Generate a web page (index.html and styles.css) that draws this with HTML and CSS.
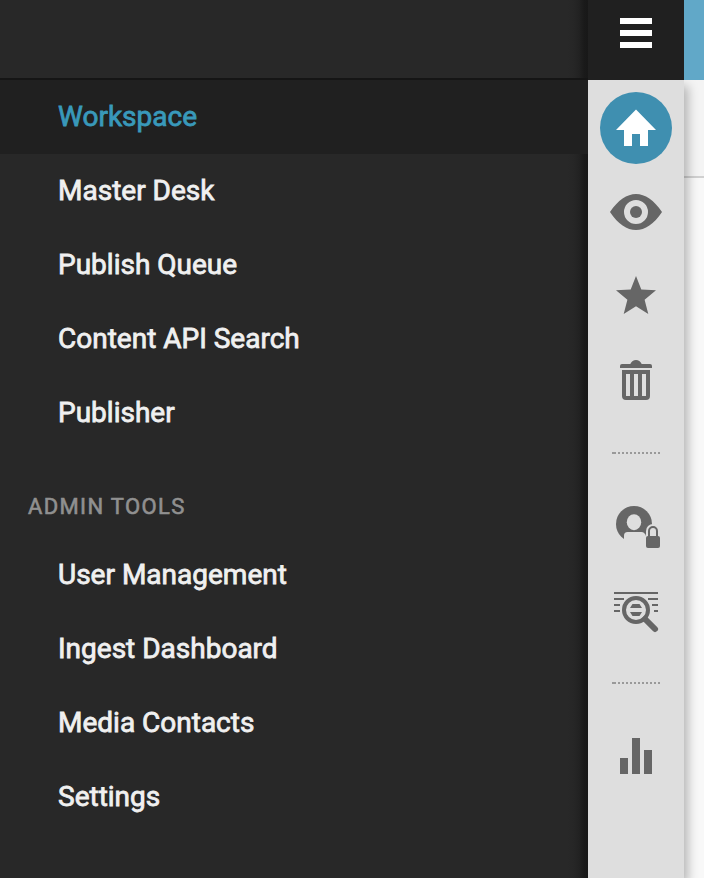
FILE: index.html
```html
<!DOCTYPE html>
<html lang="en">
<head>
<meta charset="utf-8">
<title>Workspace</title>
<link rel="stylesheet" href="styles.css">
</head>
<body>
<div class="app">
  <nav class="menu">
    <div class="menu-head"></div>
    <ul class="menu-list">
      <li class="item active">Workspace</li>
      <li class="item">Master Desk</li>
      <li class="item">Publish Queue</li>
      <li class="item">Content API Search</li>
      <li class="item">Publisher</li>
    </ul>
    <h2 class="menu-title">ADMIN TOOLS</h2>
    <ul class="menu-list">
      <li class="item">User Management</li>
      <li class="item">Ingest Dashboard</li>
      <li class="item">Media Contacts</li>
      <li class="item">Settings</li>
    </ul>
  </nav>
  <aside class="side">
    <button class="burger" aria-label="Menu"><span></span><span></span><span></span></button>
    <div class="rail">
      <svg class="icon home" viewBox="0 0 72 72"><path d="M36 17.500 56 38h-8v16h-8V42h-8v12h-8V38h-8z"/></svg>
      <svg class="icon" viewBox="0 0 72 72"><path fill-rule="evenodd" d="M10 36C18 24 27 18 36 18s18 6 26 18C54 48 45 54 36 54S18 48 10 36zM36 24a12 12 0 1 0 0 24 12 12 0 0 0 0-24z"/><circle cx="36" cy="36" r="6"/></svg>
      <svg class="icon" viewBox="0 0 72 72"><path d="M36 16l5.300 13.600 14.700.7-11.400 9.400L48.300 54 36 46.200 23.700 54l3.700-14.300L16 30.300l14.700-.7z"/></svg>
      <svg class="icon" viewBox="0 0 72 72"><path fill-rule="evenodd" d="M20 24v-2q0-2 2-2h8.300q2-4 5.700-4t5.700 4H50q2 0 2 2v2zM22 26h28v26q0 4-4 4H26q-4 0-4-4zm4 4v22h4V30zm8 0v22h4V30zm8 0v22h4V30z"/></svg>
      <div class="dots"></div>
      <svg class="icon" viewBox="0 0 72 72"><circle cx="34" cy="34" r="18"/><g class="cut"><ellipse cx="34" cy="32.200" rx="7.200" ry="8"/><path d="M24 54V45.500q0-3.500 3.500-3.500h14q3 0 4.500 4v8z"/><path d="M46 47v-6a7 7 0 0 1 14 0v6z"/></g><rect x="46" y="46" width="14" height="12" rx="2"/><path class="line thin" d="M49 47v-6a4 4 0 0 1 8 0v6"/></svg>
      <svg class="icon" viewBox="0 0 72 72"><path d="M14 18h44v2H14zM14 24h10v2H14zM48 24h10v2H48zM14 30h6v2h-6zM52 30h6v2h-6zM14 36h6v2h-6zM54 36h4v2h-4zM32.500 30h7l2.500 4H30zM30 38h12l-2.500 4h-7z"/><circle class="line" cx="36" cy="36" r="12"/><path class="line handle" d="M45 45l10 10"/></svg>
      <div class="dots"></div>
      <svg class="icon" viewBox="0 0 72 72"><path d="M20 38h8v16h-8zM32 18h8v36h-8zM44 30h8v24h-8z"/></svg>
    </div>
  </aside>
  <main class="content">
    <div class="topbar"></div>
    <div class="toolbar"></div>
  </main>
</div>
</body>
</html>
```
FILE: styles.css
```css
* { box-sizing: border-box; }
body { margin: 0; font-family: Roboto, "Liberation Sans", sans-serif; }
.app { display: grid; grid-template-columns: 588px 96px 1fr; height: 878px; overflow: hidden; }
.menu { background: linear-gradient(to left, #181818 0, #1a1a1a 4px, #222 9px, #262626 14px, #282828 20px); }
.menu-head { height: 80px; border-bottom: 2px solid #151515; }
.menu-list { list-style: none; margin: 0; padding: 0; }
.item { height: 74px; padding-left: 58px; font-size: 28px; line-height: 73px; color: #f0f0f0; -webkit-text-stroke: 0.8px currentColor; }
.item.active { background: #202020; color: #3999ba; }
.menu-title { margin: 0; height: 88px; padding: 37px 0 0 28px; font-size: 22px; line-height: 40px; font-weight: 400; letter-spacing: 1.35px; color: #909090; -webkit-text-stroke: 0.6px currentColor; }
.side { display: flex; flex-direction: column; z-index: 1; }
.burger { height: 80px; border: 0; padding: 18px 32px 0; background: #202020; display: flex; flex-direction: column; gap: 6px; }
.burger span { width: 32px; height: 6px; background: #fff; }
.rail { flex: 1; padding: 12px; background: #dedede; display: flex; flex-direction: column; gap: 12px; box-shadow: 4px 6px 10px rgba(0, 0, 0, .27); clip-path: inset(0 -20px 0 0); }
.icon { display: block; width: 72px; height: 72px; flex: none; fill: #666; }
.home { border-radius: 50%; background: #3f8fb0; fill: #fff; }
.cut { fill: #dedede; }
.line { fill: none; stroke: #666; stroke-width: 4; }
.thin { stroke-width: 2; }
.handle { stroke-width: 6; stroke-linecap: round; }
.dots { flex: none; height: 2px; margin: 24px 12px; background: linear-gradient(90deg, #999 4px, transparent 4px), repeating-linear-gradient(90deg, transparent 0 2px, #999 2px 4px); }
.content { background: #f8f8f8; }
.topbar { height: 80px; background: #61a8c8; }
.toolbar { height: 98px; background: #f4f4f4; border-bottom: 2px solid #d0d0d0; }
```
